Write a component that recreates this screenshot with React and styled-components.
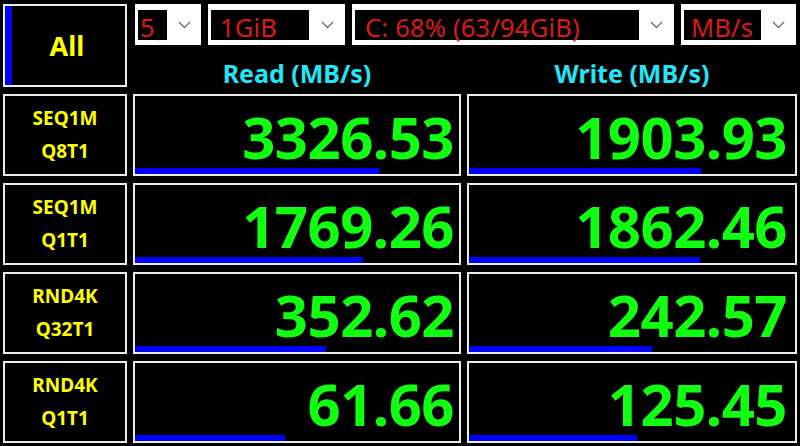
import React from 'react';
import styled, { createGlobalStyle } from 'styled-components';

const GlobalStyle = createGlobalStyle`
	html, body {
		margin: 0;
		padding: 0;
		background: #000;
	}
	body {
		font-family: 'Noto Sans', 'Open Sans', sans-serif;
	}
`;

const Board = styled.div`
	width: 800px;
	height: 446px;
	box-sizing: border-box;
	padding: 4px 0 0 3px;
	background: #000;
	display: grid;
	grid-template-columns: 124px 328px 330px;
	grid-template-rows: 83px repeat(4, 82px);
	column-gap: 6px;
	row-gap: 7px;
`;

const AllButton = styled.div`
	border: 2px solid #ececec;
	box-shadow: inset 7px 0 0 #0000ff;
	display: flex;
	align-items: center;
	justify-content: center;
	color: #ffff00;
	font-weight: 700;
	font-size: 27px;
	padding-left: 4px;
`;

const Header = styled.div`
	grid-column: 2 / 4;
	display: flex;
	flex-direction: column;
`;

const ComboRow = styled.div`
	display: flex;
	gap: 7px;
	padding-left: 2px;
	height: 41px;
`;

const Combo = styled.div`
	width: ${(p) => p.$w}px;
	box-sizing: border-box;
	background: #fff;
	display: flex;
	align-items: center;
	padding: 0 0 0 3px;
`;

const ComboText = styled.div`
	width: ${(p) => p.$w}px;
	box-sizing: border-box;
	height: 30px;
	padding: 0 0 0 ${(p) => p.$pad}px;
	background: #000;
	color: #dc1818;
	font-size: 25.5px;
	line-height: 35px;
	letter-spacing: 0.2px;
	white-space: nowrap;
`;

const Arrow = styled.div`
	flex: 1;
	display: flex;
	align-items: center;
	justify-content: center;
`;

const Titles = styled.div`
	display: grid;
	grid-template-columns: 328px 330px;
	column-gap: 6px;
	margin-top: 14px;
`;

const Title = styled.div`
	text-align: center;
	color: #22e6f6;
	font-weight: 700;
	font-size: 25px;
	line-height: 28px;
`;

const Label = styled.div`
	border: 2px solid #ececec;
	display: flex;
	flex-direction: column;
	align-items: center;
	justify-content: center;
	color: #ffff00;
	font-weight: 700;
	font-size: 19px;
	line-height: 33px;
`;

const Cell = styled.div`
	border: 2px solid #ececec;
	display: flex;
	flex-direction: column;
	justify-content: space-between;
	overflow: hidden;
`;

const Value = styled.div`
	text-align: right;
	color: #11ff11;
	font-weight: 700;
	font-size: 58px;
	line-height: 1;
	padding: 12px ${(p) => p.$right}px 0 0;
	letter-spacing: -0.5px;
`;

const Bar = styled.div`
	height: 6px;
	background: #0000ff;
`;

const Chevron = () => (
	<svg width='13' height='8' viewBox='0 0 13 8'>
		<path d='M1 1 L6.5 6.5 L12 1' fill='none' stroke='#707070' strokeWidth='1.4' />
	</svg>
);

const combos = [
	{ w: 66, tw: 29, pad: 2, text: '5' },
	{ w: 137, tw: 98, pad: 9, text: '1GiB' },
	{ w: 322, tw: 284, pad: 10, text: 'C: 68% (63/94GiB)' },
	{ w: 115, tw: 77, pad: 7, text: 'MB/s' },
];

const rows = [
	{ top: 'SEQ1M', bottom: 'Q8T1', read: '3326.53', write: '1903.93', rBar: 75.3, wBar: 71.2 },
	{ top: 'SEQ1M', bottom: 'Q1T1', read: '1769.26', write: '1862.46', rBar: 70.4, wBar: 70.9 },
	{ top: 'RND4K', bottom: 'Q32T1', read: '352.62', write: '242.57', rBar: 59.0, wBar: 56.1 },
	{ top: 'RND4K', bottom: 'Q1T1', read: '61.66', write: '125.45', rBar: 46.3, wBar: 51.5 },
];

const App = () => {
	return (
		<>
			<GlobalStyle />
			<Board>
				<AllButton>All</AllButton>
				<Header>
					<ComboRow>
						{combos.map((c) => (
							<Combo key={c.text} $w={c.w}>
								<ComboText $w={c.tw} $pad={c.pad}>{c.text}</ComboText>
								<Arrow>
									<Chevron />
								</Arrow>
							</Combo>
						))}
					</ComboRow>
					<Titles>
						<Title>Read (MB/s)</Title>
						<Title>Write (MB/s)</Title>
					</Titles>
				</Header>
				{rows.map((r) => (
					<React.Fragment key={r.top + r.bottom}>
						<Label>
							<span>{r.top}</span>
							<span>{r.bottom}</span>
						</Label>
						<Cell>
							<Value $right={5}>{r.read}</Value>
							<Bar style={{ width: r.rBar + '%' }} />
						</Cell>
						<Cell>
							<Value $right={8}>{r.write}</Value>
							<Bar style={{ width: r.wBar + '%' }} />
						</Cell>
					</React.Fragment>
				))}
			</Board>
		</>
	);
};

export default App;
